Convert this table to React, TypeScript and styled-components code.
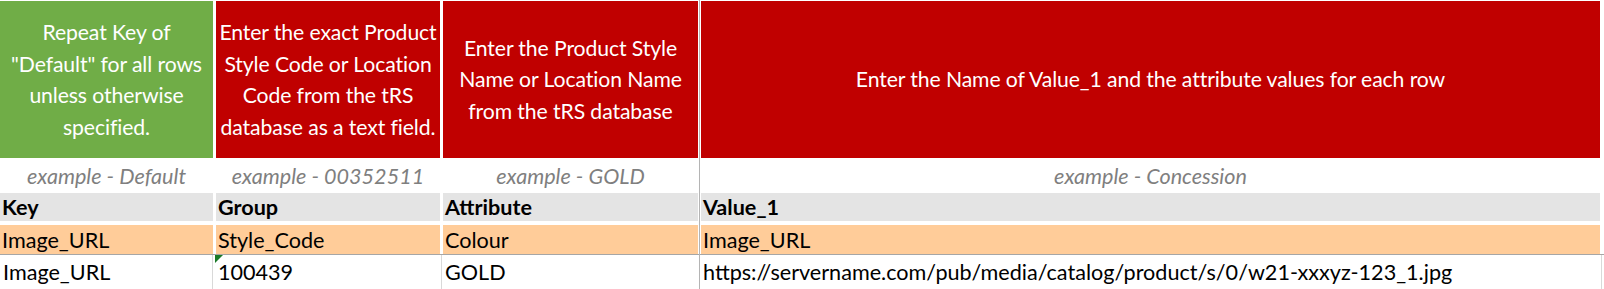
import React from 'react'
import styled, { createGlobalStyle } from 'styled-components'

const GlobalStyle = createGlobalStyle`
  html, body {
    margin: 0;
    padding: 0;
    background: #ffffff;
    overflow: hidden;
  }
  body {
    font-family: Lato, 'Open Sans', sans-serif;
    font-size: 21.6px;
    color: #000000;
  }
`

const Sheet = styled.div`
  position: relative;
  width: 1604px;
  padding-top: 1px;

  /* column C / D gridline, runs the whole sheet height */
  &::after {
    content: '';
    position: absolute;
    left: 699px;
    top: 0;
    bottom: 0;
    width: 1px;
    background: #b4b4b4;
  }
`

const BandRow = styled.div<{ $height: number; $gapBelow?: number }>`
  display: grid;
  grid-template-columns: 213px 224px 255px 899px;
  column-gap: 3px;
  height: ${(p) => p.$height}px;
  margin-bottom: ${(p) => p.$gapBelow || 0}px;
`

const HeaderCell = styled.div<{ $fill: string }>`
  background: ${(p) => p.$fill};
  color: #ffffff;
  display: flex;
  flex-direction: column;
  align-items: center;
  justify-content: center;
  text-align: center;
  font-size: 21.2px;
  letter-spacing: -0.1px;
  line-height: 31.5px;
  padding-top: 1px;
`

const Line = styled.span`
  white-space: nowrap;
`

const ExampleCell = styled.div`
  display: flex;
  align-items: center;
  justify-content: center;
  font-style: italic;
  color: #7f7f7f;
  line-height: 26px;
  white-space: nowrap;
`

const FieldCell = styled.div<{ $fill: string; $bold?: boolean }>`
  background: ${(p) => p.$fill};
  display: flex;
  align-items: center;
  padding-left: 2px;
  font-weight: ${(p) => (p.$bold ? 700 : 400)};
  line-height: 26px;
  white-space: nowrap;
`

const DataRow = styled.div<{ $top: string; $bottom: string; $height: number }>`
  display: grid;
  grid-template-columns: 213px 229px 258px 902px;
  height: ${(p) => p.$height}px;
  border-top: 1px solid ${(p) => p.$top};
  border-bottom: 1px solid ${(p) => p.$bottom};
`

const DataCell = styled.div<{ $pad: number }>`
  position: relative;
  display: flex;
  align-items: center;
  padding-left: ${(p) => p.$pad}px;
  border-right: 1px solid #d9d9d9;
  line-height: 26px;
  white-space: nowrap;
`

// excel's "number stored as text" marker
const TextFlag = styled.span`
  position: absolute;
  left: 2px;
  top: 0;
  width: 0;
  height: 0;
  border-top: 8px solid #1b7a28;
  border-right: 8px solid transparent;
`

const GREEN = '#70ad47'
const RED = '#c00000'
const GREY = '#e4e4e4'
const PEACH = '#ffcc99'

const headers: { fill: string; lines: string[] }[] = [
  { fill: GREEN, lines: ['Repeat Key of', '"Default" for all rows', 'unless otherwise', 'specified.'] },
  { fill: RED, lines: ['Enter the exact Product', 'Style Code or Location', 'Code from the tRS', 'database as a text field.'] },
  { fill: RED, lines: ['Enter the Product Style', 'Name or Location Name', 'from the tRS database'] },
  { fill: RED, lines: ['Enter the Name of Value_1 and the attribute values for each row'] },
]

const examples = ['example - Default', 'example - 00352511', 'example - GOLD', 'example - Concession']
const fields = ['Key', 'Group', 'Attribute', 'Value_1']
const mapping = ['Image_URL', 'Style_Code', 'Colour', 'Image_URL']
const sample = [
  'Image_URL',
  '100439',
  'GOLD',
  'https://servername.com/pub/media/catalog/product/s/0/w21-xxxyz-123_1.jpg',
]
const pads = [3, 5, 3, 3]

const App = () => {
  return (
    <>
      <GlobalStyle />
      <Sheet>
        <BandRow $height={157}>
          {headers.map((h, i) => (
            <HeaderCell key={i} $fill={h.fill}>
              {h.lines.map((l) => (
                <Line key={l}>{l}</Line>
              ))}
            </HeaderCell>
          ))}
        </BandRow>
        <BandRow $height={35}>
          {examples.map((e) => (
            <ExampleCell key={e}>{e}</ExampleCell>
          ))}
        </BandRow>
        <BandRow $height={28} $gapBelow={4}>
          {fields.map((f) => (
            <FieldCell key={f} $fill={GREY} $bold>
              {f}
            </FieldCell>
          ))}
        </BandRow>
        <BandRow $height={29}>
          {mapping.map((m, i) => (
            <FieldCell key={i} $fill={PEACH}>
              {m}
            </FieldCell>
          ))}
        </BandRow>
        <DataRow $top="#a6a6a6" $bottom="#d4d4d4" $height={34}>
          {sample.map((s, i) => (
            <DataCell key={i} $pad={pads[i]}>
              {i === 1 && <TextFlag />}
              {s}
            </DataCell>
          ))}
        </DataRow>
        <DataRow $top="transparent" $bottom="transparent" $height={8}>
          {pads.map((p, i) => (
            <DataCell key={i} $pad={p}>
              {i === 1 && <TextFlag />}
            </DataCell>
          ))}
        </DataRow>
      </Sheet>
    </>
  )
}

export default App
